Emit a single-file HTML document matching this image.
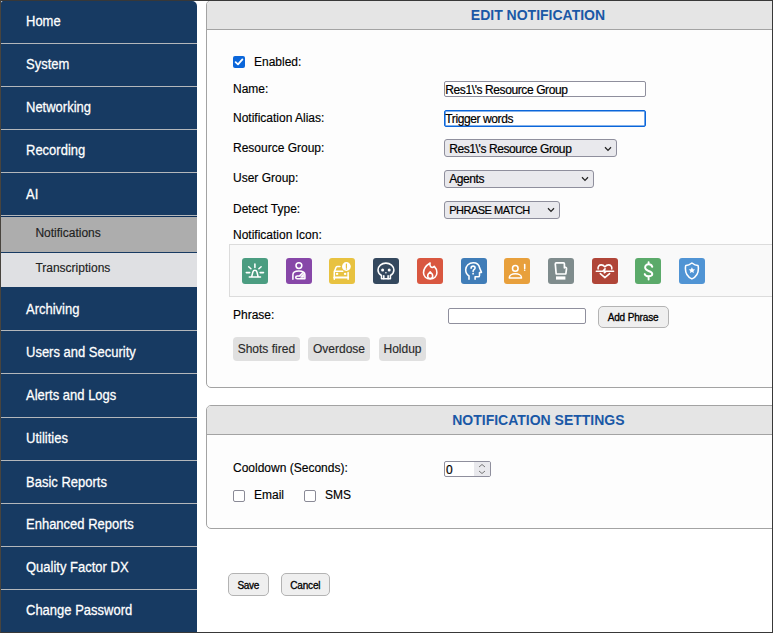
<!DOCTYPE html>
<html><head><meta charset="utf-8">
<style>
*{box-sizing:border-box;margin:0;padding:0}
html,body{width:773px;height:633px;overflow:hidden;background:#fff;font-family:"Liberation Sans",sans-serif}
.a{position:absolute}
.t{position:absolute;white-space:nowrap;line-height:1}
#frame{position:absolute;left:0;top:0;width:773px;height:633px;border:1px solid #383838;border-left-color:#48443e;z-index:50;pointer-events:none}
#side{position:absolute;left:1px;top:1px;width:196px;height:631px;background:#173a62;border-top-right-radius:5px;border-top-left-radius:2px;overflow:hidden}
.sep{position:absolute;left:0;width:196px;height:1px;background:#b4b7bb}
.nav{font-size:13px;color:#fff;left:25px;transform:scaleY(1.1);transform-origin:0 11px;-webkit-text-stroke:0.25px #fff}
.sub{font-size:12px;color:#222;left:34.4px;-webkit-text-stroke:0.15px #222}
.panel{position:absolute;left:206px;width:700px;border:1px solid #a3a3a3;border-radius:5px;background:#fdfdfd;overflow:hidden}
.ph{position:absolute;left:0;top:0;width:100%;background:#e5e5e5;border-bottom:1px solid #a3a3a3}
.title{font-size:14px;font-weight:bold;color:#1a58a6}
.lbl{font-size:12px;color:#000;left:233px;-webkit-text-stroke:0.15px #000}
.inp{position:absolute;background:#fff;border:1px solid #8f8f9d;border-radius:2px}
.itx{font-size:12px;color:#000;letter-spacing:-0.4px;-webkit-text-stroke:0.2px #000}
.sel{position:absolute;background:#e9e9ed;border:1px solid #8f8f9d;border-radius:3px}
.chev{position:absolute;top:5px;width:10px;height:7px}
.ico{position:absolute;top:258px;width:26px;height:26px;border-radius:3px}
.ico svg{position:absolute;left:0;top:0;width:26px;height:26px}
.tag{position:absolute;top:337px;height:23.5px;background:#e0e0e0;border-radius:4px}
.tgt{font-size:12px;color:#2a2a2a;-webkit-text-stroke:0.15px #2a2a2a}
.btn{position:absolute;background:#efefef;border:1px solid #b3b3b3;border-radius:5px}
.btx{font-size:10px;color:#000;-webkit-text-stroke:0.3px #000}
.cb{position:absolute;width:12px;height:12px;border:1px solid #8a8a96;border-radius:2px;background:#fff}
</style></head><body>
<div id="side">
  <div class="sep" style="top:42px"></div>
  <div class="sep" style="top:85px"></div>
  <div class="sep" style="top:128px"></div>
  <div class="sep" style="top:171px"></div>
  <div class="sep" style="top:214px"></div>
  <div class="a" style="left:0;top:215px;width:196px;height:1px;background:#0d2f5a"></div>
  <div class="a" style="left:0;top:216px;width:196px;height:35px;background:#adadad"></div>
  <div class="a" style="left:0;top:252px;width:196px;height:34px;background:#dfe0e3"></div>
  <div class="sep" style="top:329px"></div>
  <div class="sep" style="top:372px"></div>
  <div class="sep" style="top:416px"></div>
  <div class="sep" style="top:459px"></div>
  <div class="sep" style="top:502px"></div>
  <div class="sep" style="top:545px"></div>
  <div class="sep" style="top:588px"></div>
  <div class="t nav" style="top:14.3px">Home</div>
  <div class="t nav" style="top:57.3px">System</div>
  <div class="t nav" style="top:100.3px">Networking</div>
  <div class="t nav" style="top:143.3px">Recording</div>
  <div class="t nav" style="top:187.3px">AI</div>
  <div class="t sub" style="top:225.9px">Notifications</div>
  <div class="t sub" style="top:260.8px">Transcriptions</div>
  <div class="t nav" style="top:302px">Archiving</div>
  <div class="t nav" style="top:345px">Users and Security</div>
  <div class="t nav" style="top:388px">Alerts and Logs</div>
  <div class="t nav" style="top:431px">Utilities</div>
  <div class="t nav" style="top:474.5px">Basic Reports</div>
  <div class="t nav" style="top:517.2px">Enhanced Reports</div>
  <div class="t nav" style="top:560px">Quality Factor DX</div>
  <div class="t nav" style="top:603.1px">Change Password</div>
</div>

<!-- panel 1 -->
<div class="panel" style="top:0px;height:388px">
  <div class="ph" style="height:29px"></div>
</div>
<div class="t title" style="left:470.8px;top:8px">EDIT NOTIFICATION</div>

<div class="a" style="left:233px;top:56px;width:12px;height:12px;border-radius:2px;background:#0b66da">
  <svg width="12" height="12" viewBox="0 0 12 12" style="position:absolute;left:0;top:0"><path d="M2.6 6.2 L5 8.4 L9.4 3.4" fill="none" stroke="#fff" stroke-width="1.8" stroke-linecap="round" stroke-linejoin="round"/></svg>
</div>
<div class="t lbl" style="left:254px;top:55.8px">Enabled:</div>
<div class="t lbl" style="top:82.5px">Name:</div>
<div class="t lbl" style="top:111.8px">Notification Alias:</div>
<div class="t lbl" style="top:141.8px">Resource Group:</div>
<div class="t lbl" style="top:171.8px">User Group:</div>
<div class="t lbl" style="top:202.8px">Detect Type:</div>
<div class="t lbl" style="top:228.8px">Notification Icon:</div>

<div class="inp" style="left:444px;top:81px;width:202px;height:16px"></div>
<div class="t itx" style="left:445.3px;top:83.6px">Res1\'s Resource Group</div>
<div class="inp" style="left:444px;top:110px;width:202px;height:17px;border:1px solid #0b66da;box-shadow:inset 0 0 0 0.6px #0b66da;border-radius:2px"></div>
<div class="t itx" style="left:445.3px;top:112.9px">Trigger words</div>

<div class="sel" style="left:444px;top:139px;width:173px;height:18px"></div>
<div class="t itx" style="left:449.2px;top:143px">Res1\'s Resource Group</div>
<div class="sel" style="left:444px;top:170px;width:150px;height:18px"></div>
<div class="t itx" style="left:449.2px;top:173.2px">Agents</div>
<div class="sel" style="left:444px;top:201px;width:116px;height:18px"></div>
<div class="t itx" style="left:449.2px;top:205px;font-size:11px;letter-spacing:-0.5px">PHRASE MATCH</div>
<svg class="a" style="left:604px;top:145.5px" width="8" height="6" viewBox="0 0 8 6"><path d="M1 1.3 L4 4.4 L7 1.3" fill="none" stroke="#222" stroke-width="1.25"/></svg>
<svg class="a" style="left:581px;top:176.2px" width="8" height="6" viewBox="0 0 8 6"><path d="M1 1.3 L4 4.4 L7 1.3" fill="none" stroke="#222" stroke-width="1.25"/></svg>
<svg class="a" style="left:547px;top:207.2px" width="8" height="6" viewBox="0 0 8 6"><path d="M1 1.3 L4 4.4 L7 1.3" fill="none" stroke="#222" stroke-width="1.25"/></svg>

<!-- icon strip -->
<div class="a" style="left:229px;top:244px;width:600px;height:53px;border:1px solid #dcdcdc;background:#f9f9f9"></div>
<!--ICONS--><div class="ico" style="left:242px;background:#4b9d81"><svg viewBox="0 0 26 26" fill="none" stroke="#fff" stroke-width="1.55" stroke-linecap="round" stroke-linejoin="round"><path d="M12.9 6.1V9.5M6.7 8.7L8.9 10.7M19.1 8.7L16.9 10.7M4.3 14.6H7.7M18.1 14.6H21.5M9.7 18.6L10.9 13.9Q11.4 12.3 12.9 12.3Q14.4 12.3 14.9 13.9L16.1 18.6M7.3 19H18.5"/></svg></div>
<div class="ico" style="left:286px;background:#8747a8"><svg viewBox="0 0 26 26" fill="none" stroke="#fff" stroke-width="1.55" stroke-linecap="round" stroke-linejoin="round"><circle cx="12.9" cy="7.6" r="2.9"/><path d="M6.9 21.3V16.8Q6.9 13 12.9 13Q18.9 13 18.9 16.8V20.7H11.3Q9.7 20.7 9.7 19.3Q9.7 17.9 11.3 17.9H13.6L17.2 14.3"/><path d="M15 18.5L17.6 15.6V19.3H15Z" fill="#fff" stroke-width="0.8"/></svg></div>
<div class="ico" style="left:329px;background:#e8c240"><svg viewBox="0 0 26 26" fill="none" stroke="#fff" stroke-width="1.55" stroke-linecap="round" stroke-linejoin="round"><path d="M5.3 21.2V13.8L7.1 9.3Q7.5 8.4 8.5 8.4H10.9M5.3 13.3H13.8M19.1 14.6V21.2"/><path d="M5.3 19.6H19.1" stroke-width="2"/><ellipse cx="8.1" cy="15.9" rx="1.3" ry="1.05" fill="#fff" stroke="none"/><ellipse cx="16.1" cy="15.9" rx="1.3" ry="1.05" fill="#fff" stroke="none"/><circle cx="17.4" cy="8.5" r="4.4" fill="#fff" stroke="none"/><path d="M17.4 6V9.6" stroke="#e8c240" stroke-width="1.2"/><circle cx="17.4" cy="11" r="0.65" fill="#e8c240" stroke="none"/></svg></div>
<div class="ico" style="left:373px;background:#34485e"><svg viewBox="0 0 26 26" fill="none" stroke="#fff" stroke-width="1.55" stroke-linecap="round" stroke-linejoin="round"><path d="M12.9 5.1C17.3 5.1 20.9 8.3 20.9 12.1C20.9 14.2 19.9 16.1 17.4 17.5V20.8H8.5V17.5C6 16.1 5 14.2 5 12.1C5 8.3 8.5 5.1 12.9 5.1Z"/><circle cx="9.6" cy="12" r="1.5" fill="#fff" stroke="none"/><circle cx="16.2" cy="12" r="1.5" fill="#fff" stroke="none"/><circle cx="12.9" cy="14.7" r="0.8" fill="#fff" stroke="none"/><path d="M10.8 17.8V20.8M15.1 17.8V20.8"/></svg></div>
<div class="ico" style="left:417px;background:#d95740"><svg viewBox="0 0 26 26" fill="none" stroke="#fff" stroke-width="1.55" stroke-linecap="round" stroke-linejoin="round"><path d="M13.2 21C9.3 21 6.5 18.3 6.5 14.8C6.5 10.8 9.6 7.2 13.1 5C12.5 7.5 13.6 9.4 15.1 9.4C16 9.4 16.7 9 17.3 8.4C19 10 19.9 12.3 19.9 14.8C19.9 18.3 17.1 21 13.2 21Z"/><path d="M13.2 13.9C11.6 15.3 10.7 16.6 10.7 18C10.7 19.4 11.8 20.5 13.2 20.5C14.6 20.5 15.7 19.4 15.7 18C15.7 16.6 14.8 15.3 13.2 13.9Z"/></svg></div>
<div class="ico" style="left:461px;background:#407db8"><svg viewBox="0 0 26 26" fill="none" stroke="#fff" stroke-width="1.55" stroke-linecap="round" stroke-linejoin="round"><path d="M8 21.3V18C5.9 16.6 4.7 14.3 4.7 11.8C4.7 7.8 8.1 4.7 12.2 4.7C15.5 4.7 18.1 6.9 18.6 9.9L20.5 14.4H18.5V17.4C18.5 18.2 18 18.8 17.2 18.8H14.1V21.3"/><path d="M10.1 10.2C10.1 9 11 8.1 12.1 8.1C13.2 8.1 14.1 9 14.1 10.1C14.1 11.1 13.3 11.5 12.7 11.9C12.2 12.3 12.1 12.7 12.1 13.4"/><circle cx="12.1" cy="15.7" r="0.9" fill="#fff" stroke="none"/></svg></div>
<div class="ico" style="left:504px;background:#e8a03c"><svg viewBox="0 0 26 26" fill="none" stroke="#fff" stroke-width="1.55" stroke-linecap="round" stroke-linejoin="round"><circle cx="11.3" cy="10.4" r="2.8"/><path d="M5.3 19.9C5.3 17.4 8 15.8 11.3 15.8C14.6 15.8 17.5 17.4 17.5 19.9Z"/><path d="M20.7 6.5V10.6"/><circle cx="20.7" cy="12.3" r="0.8" fill="#fff" stroke="none"/></svg></div>
<div class="ico" style="left:548px;background:#7f8c8d"><svg viewBox="0 0 26 26" fill="none" stroke="#fff" stroke-width="1.55" stroke-linecap="round" stroke-linejoin="round"><path stroke-width="1.7" d="M8.3 4.8H15.5Q16.4 4.8 16.4 5.7V9.8Q16.6 9.4 17.3 9.4Q18.6 9.4 18.5 10.9L17.8 16H8.2L7.3 6.1Q7.3 4.8 8.3 4.8Z"/><rect x="8" y="18.4" width="9.4" height="3.2" fill="#fff" stroke="none"/></svg></div>
<div class="ico" style="left:592px;background:#b04538"><svg viewBox="0 0 26 26" fill="none" stroke="#fff" stroke-width="1.55" stroke-linecap="round" stroke-linejoin="round"><path d="M6.1 10.9C5.6 8.6 7.3 6.9 9.2 6.9C10.8 6.9 12.1 7.8 12.9 8.9C13.7 7.8 15 6.9 16.6 6.9C18.6 6.9 20.2 8.6 19.8 10.9M4.3 13.2H10.8L13 10.7L12.3 14.8L14.4 13.2H21.6M8.3 15.6L12.9 19.6L17.6 15.6"/></svg></div>
<div class="ico" style="left:635px;background:#5baa6a"><svg viewBox="0 0 26 26" fill="none" stroke="#fff" stroke-width="1.55" stroke-linecap="round" stroke-linejoin="round"><path stroke-width="1.9" d="M17.3 8.9C16.8 7.3 15.4 6.3 13.6 6.3C11.6 6.3 10.1 7.6 10.1 9.6C10.1 11.7 11.9 12.4 13.6 13C15.5 13.7 17.3 14.4 17.3 16.1C17.3 17.6 15.7 18.3 13.6 18.3C11.7 18.3 10.2 17.4 9.7 16.1M13.6 4.1V6.3M13.6 18.3V21.5"/></svg></div>
<div class="ico" style="left:679px;background:#5094d4"><svg viewBox="0 0 26 26" fill="none" stroke="#fff" stroke-width="1.55" stroke-linecap="round" stroke-linejoin="round"><path d="M12.9 5C15 6.6 17 7.4 19 7.5C19.3 8.5 19.4 9.6 19.4 10.6C19.4 15.6 16.8 19.3 12.9 20.9C9 19.3 6.4 15.6 6.4 10.6C6.4 9.6 6.5 8.5 6.8 7.5C8.8 7.4 10.8 6.6 12.9 5Z"/><path d="M12.9 9.2L13.9 11.2L16.1 11.4L14.4 12.9L14.9 15.1L12.9 14L10.9 15.1L11.4 12.9L9.7 11.4L11.9 11.2Z" fill="#fff" stroke="none"/></svg></div><!--/ICONS-->

<div class="t lbl" style="top:308.8px">Phrase:</div>
<div class="inp" style="left:448px;top:308px;width:138px;height:16px"></div>
<div class="btn" style="left:598px;top:306px;width:71px;height:21.5px"></div>
<div class="t btx" style="left:607.7px;top:313px;letter-spacing:-0.15px">Add Phrase</div>

<div class="tag" style="left:233px;width:67px"></div>
<div class="t tgt" style="left:237.7px;top:342.6px">Shots fired</div>
<div class="tag" style="left:308px;width:62px"></div>
<div class="t tgt" style="left:313px;top:342.6px">Overdose</div>
<div class="tag" style="left:379px;width:47px"></div>
<div class="t tgt" style="left:383.5px;top:342.6px">Holdup</div>

<!-- panel 2 -->
<div class="panel" style="top:405px;height:124px">
  <div class="ph" style="height:29px"></div>
</div>
<div class="t title" style="left:452.2px;top:413.2px">NOTIFICATION SETTINGS</div>
<div class="t lbl" style="top:461.8px">Cooldown (Seconds):</div>
<div class="inp" style="left:444px;top:461px;width:47px;height:16px"></div>
<div class="a" style="left:474px;top:462px;width:16px;height:14px;background:#e9e9ed"></div>
<svg class="a" style="left:477px;top:462px" width="10" height="14" viewBox="0 0 10 14"><path d="M2 5 L5 2.5 L8 5 M2 9 L5 11.5 L8 9" fill="none" stroke="#777" stroke-width="1"/></svg>
<div class="t itx" style="left:446px;top:463.5px">0</div>
<div class="cb" style="left:233px;top:490px"></div>
<div class="t lbl" style="left:254px;top:488.6px">Email</div>
<div class="cb" style="left:304px;top:490px"></div>
<div class="t lbl" style="left:325px;top:488.6px">SMS</div>

<div class="btn" style="left:228px;top:573px;width:41px;height:23px"></div>
<div class="t btx" style="left:237.4px;top:581.2px;letter-spacing:-0.3px">Save</div>
<div class="btn" style="left:281px;top:573px;width:49px;height:23px"></div>
<div class="t btx" style="left:290.2px;top:581.2px;letter-spacing:-0.15px">Cancel</div>

<div id="frame"></div>
</body></html>
